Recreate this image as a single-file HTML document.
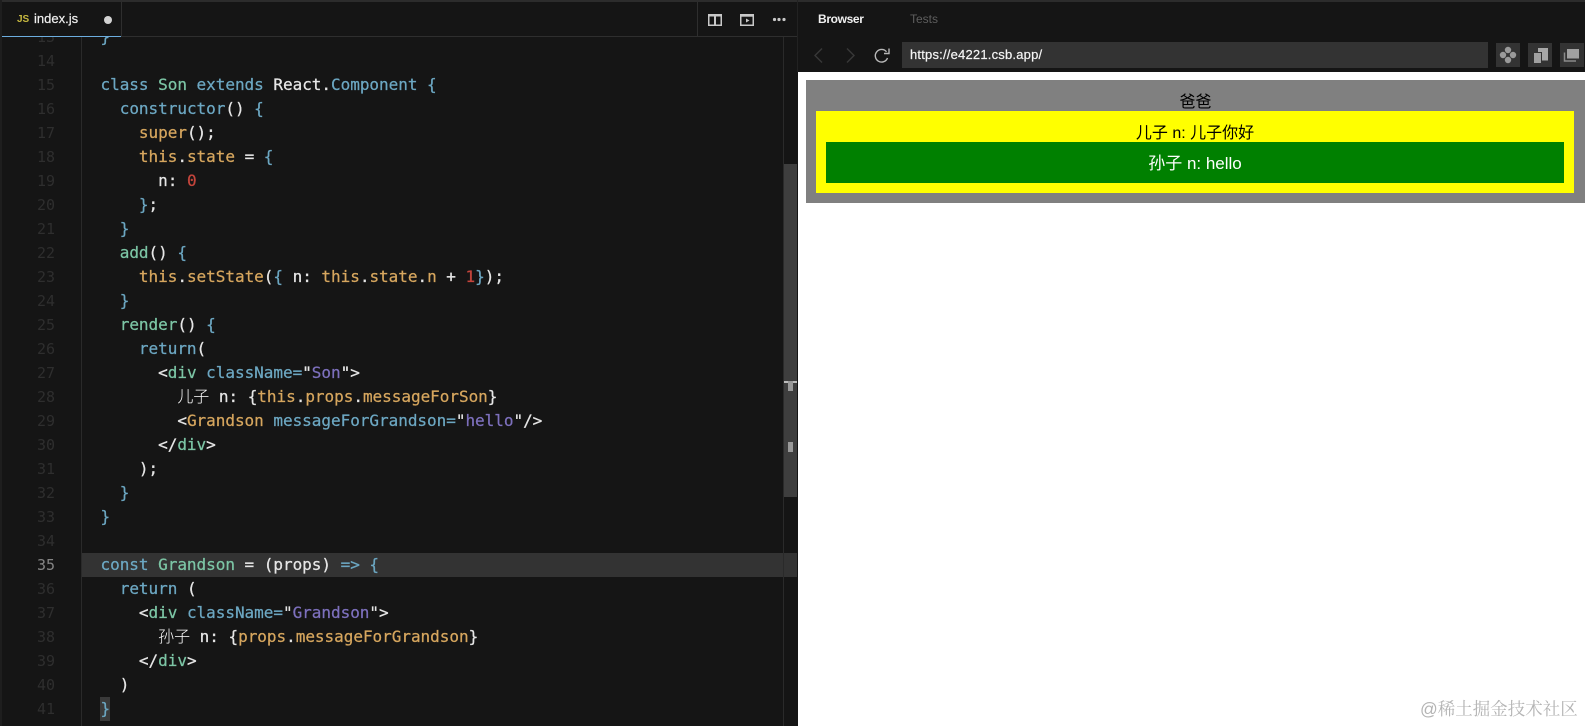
<!DOCTYPE html>
<html><head><meta charset="utf-8"><style>
html,body{margin:0;padding:0;width:1585px;height:726px;overflow:hidden;background:#151515}
*{box-sizing:border-box}
.a{position:absolute}
.l,.n{position:absolute;height:24px;line-height:24px;font:16px/24px "DejaVu Sans Mono","Liberation Mono","Noto Sans CJK SC",monospace;white-space:pre;letter-spacing:-.03px}
.l{left:100.5px;color:#e6e6e6;-webkit-text-stroke:.25px currentColor}
.n{left:30px;width:25px;text-align:right;color:#2e2e2e;font-size:15px}
.b{color:#6ca7c2}.g{color:#7cc5a5}.o{color:#d6a65e}.p{color:#7d70bd}.r{color:#c5453c}
.c{font-family:"WenQuanYi Zen Hei","Noto Sans CJK SC",sans-serif;font-weight:300;color:#fff;line-height:0;-webkit-text-stroke:0}
#code{position:absolute;left:0;top:37px;width:783px;height:689px;overflow:hidden}
.s{font-family:"Liberation Sans","Noto Sans CJK SC",sans-serif;text-align:center;font-size:16px;line-height:18px}
</style></head><body>
<div class="a" style="left:0;top:0;width:1585px;height:2px;background:#2c2c2c"></div>
<div class="a" style="left:0;top:0;width:2px;height:726px;background:#1e1e1e"></div>
<!-- tab bar -->
<div class="a" style="left:2px;top:36px;width:796px;height:1px;background:#2e2e2e"></div>
<div class="a" style="left:2px;top:36px;width:119px;height:1px;background:#6caddf"></div>
<div class="a" style="left:121px;top:2px;width:1px;height:35px;background:#2e2e2e"></div>
<div class="a" style="left:697px;top:2px;width:1px;height:35px;background:#2e2e2e"></div>
<div class="a" style="left:797px;top:0;width:1px;height:72px;background:#222"></div>
<div class="a" style="left:17px;top:14px;font:bold 10px/12px 'Liberation Sans',sans-serif;color:#c7b840">JS</div>
<div class="a" style="left:34px;top:11px;font:13px/16px 'Liberation Sans',sans-serif;color:#f0f0f0;-webkit-text-stroke:.2px currentColor">index.js</div>
<div class="a" style="left:104px;top:16px;width:8px;height:8px;border-radius:50%;background:#d2d2d2"></div>
<svg class="a" style="left:708px;top:13px" width="80" height="13" viewBox="0 0 80 13" fill="none" stroke="#c8c8c8" stroke-width="1.5">
<rect x=".75" y="1.75" width="12.5" height="10.5" stroke-width="1.5"/><path d="M0 2.5h14M7 2v10" stroke-width="2"/>
<rect x="32.75" y="1.75" width="12.5" height="10.5"/><path d="M32 2.5h14" stroke-width="2.4"/><path d="M38 5.5l3.5 2-3.5 2z" fill="#c8c8c8" stroke="none"/>
<circle cx="66.5" cy="6.5" r="1.6" fill="#c8c8c8" stroke="none"/><circle cx="71" cy="6.5" r="1.6" fill="#c8c8c8" stroke="none"/><circle cx="76" cy="6.5" r="1.6" fill="#c8c8c8" stroke="none"/>
</svg>
<!-- editor -->
<div class="a" style="left:81px;top:37px;width:1px;height:689px;background:#2a2a2a"></div>
<div class="a" style="left:82px;top:553px;width:715px;height:24px;background:#333"></div>
<div class="a" style="left:100px;top:697px;width:10px;height:24px;background:#3a3a3a"></div>
<div class="a" style="left:783px;top:37px;width:1px;height:689px;background:#2a2a2a"></div>
<!-- scrollbar -->
<div class="a" style="left:784px;top:164px;width:13px;height:333px;background:#3e3e3e"></div>
<div class="a" style="left:784px;top:381px;width:13px;height:2px;background:#bbb"></div>
<div class="a" style="left:788px;top:381px;width:5px;height:10px;background:#999"></div>
<div class="a" style="left:788px;top:442px;width:5px;height:10px;background:#999"></div>
<div class="a" style="left:784px;top:553px;width:13px;height:24px;background:#333"></div>
<div id="code">
<div class="n" style="top:-12px">13</div><div class="l" style="top:-12px"><span class="b">}</span></div>
<div class="n" style="top:12px">14</div>
<div class="n" style="top:36px">15</div><div class="l" style="top:36px"><span class="b">class</span> <span class="g">Son</span> <span class="b">extends</span> React.<span class="b">Component {</span></div>
<div class="n" style="top:60px">16</div><div class="l" style="top:60px">  <span class="b">constructor</span>() <span class="b">{</span></div>
<div class="n" style="top:84px">17</div><div class="l" style="top:84px">    <span class="o">super</span>();</div>
<div class="n" style="top:108px">18</div><div class="l" style="top:108px">    <span class="o">this</span>.<span class="o">state</span> = <span class="b">{</span></div>
<div class="n" style="top:132px">19</div><div class="l" style="top:132px">      n: <span class="r">0</span></div>
<div class="n" style="top:156px">20</div><div class="l" style="top:156px">    <span class="b">}</span>;</div>
<div class="n" style="top:180px">21</div><div class="l" style="top:180px">  <span class="b">}</span></div>
<div class="n" style="top:204px">22</div><div class="l" style="top:204px">  <span class="g">add</span>() <span class="b">{</span></div>
<div class="n" style="top:228px">23</div><div class="l" style="top:228px">    <span class="o">this</span>.<span class="o">setState</span>(<span class="b">{</span> n: <span class="o">this</span>.<span class="o">state</span>.<span class="o">n</span> + <span class="r">1</span><span class="b">}</span>);</div>
<div class="n" style="top:252px">24</div><div class="l" style="top:252px">  <span class="b">}</span></div>
<div class="n" style="top:276px">25</div><div class="l" style="top:276px">  <span class="g">render</span>() <span class="b">{</span></div>
<div class="n" style="top:300px">26</div><div class="l" style="top:300px">    <span class="b">return</span>(</div>
<div class="n" style="top:324px">27</div><div class="l" style="top:324px">      &lt;<span class="g">div</span> <span class="b">className=</span>"<span class="p">Son</span>"&gt;</div>
<div class="n" style="top:348px">28</div><div class="l" style="top:348px">        <span class="c">儿子</span> n: {<span class="o">this</span>.<span class="o">props</span>.<span class="o">messageForSon</span>}</div>
<div class="n" style="top:372px">29</div><div class="l" style="top:372px">        &lt;<span class="o">Grandson</span> <span class="b">messageForGrandson=</span>"<span class="p">hello</span>"/&gt;</div>
<div class="n" style="top:396px">30</div><div class="l" style="top:396px">      &lt;/<span class="g">div</span>&gt;</div>
<div class="n" style="top:420px">31</div><div class="l" style="top:420px">    );</div>
<div class="n" style="top:444px">32</div><div class="l" style="top:444px">  <span class="b">}</span></div>
<div class="n" style="top:468px">33</div><div class="l" style="top:468px"><span class="b">}</span></div>
<div class="n" style="top:492px">34</div>
<div class="n" style="top:516px;color:#858585">35</div><div class="l" style="top:516px"><span class="b">const</span> <span class="g">Grandson</span> = (props) <span class="b">=&gt; {</span></div>
<div class="n" style="top:540px">36</div><div class="l" style="top:540px">  <span class="b">return</span> (</div>
<div class="n" style="top:564px">37</div><div class="l" style="top:564px">    &lt;<span class="g">div</span> <span class="b">className=</span>"<span class="p">Grandson</span>"&gt;</div>
<div class="n" style="top:588px">38</div><div class="l" style="top:588px">      <span class="c">孙子</span> n: {<span class="o">props</span>.<span class="o">messageForGrandson</span>}</div>
<div class="n" style="top:612px">39</div><div class="l" style="top:612px">    &lt;/<span class="g">div</span>&gt;</div>
<div class="n" style="top:636px">40</div><div class="l" style="top:636px">  )</div>
<div class="n" style="top:660px">41</div><div class="l" style="top:660px"><span class="b">}</span></div>
</div>
<!-- browser -->
<div class="a" style="left:818px;top:11px;font:bold 12px/16px 'Liberation Sans',sans-serif;color:#f0f0f0;letter-spacing:-.35px">Browser</div>
<div class="a" style="left:910px;top:11px;font:12px/16px 'Liberation Sans',sans-serif;color:#5e5e5e">Tests</div>
<svg class="a" style="left:812px;top:44px" width="82" height="24" viewBox="0 0 82 24" fill="none">
<path d="M10 4.5L3 11.5l7 7" stroke="#383838" stroke-width="1.4"/>
<path d="M35 4.5l7 7-7 7" stroke="#383838" stroke-width="1.4"/>
<path d="M75.5 14a6.3 6.3 0 1 1-1-6.2" stroke="#b8b8b8" stroke-width="1.4"/><path d="M77 4.5v5h-5" stroke="#b8b8b8" stroke-width="1.4"/>
</svg>
<div class="a" style="left:902px;top:42px;width:586px;height:26px;background:#333;color:#f4f4f4;font:13px/26px 'Liberation Sans',sans-serif;padding-left:8px;letter-spacing:.2px;-webkit-text-stroke:.2px currentColor">https://e4221.csb.app/</div>
<div class="a" style="left:1496px;top:43px;width:24px;height:24px;background:#333"></div>
<div class="a" style="left:1528px;top:43px;width:24px;height:24px;background:#333"></div>
<div class="a" style="left:1560px;top:43px;width:24px;height:24px;background:#333"></div>
<svg class="a" style="left:1496px;top:43px" width="89" height="24" viewBox="0 0 89 24" fill="#9a9a9a">
<circle cx="12" cy="7" r="3.2"/><circle cx="12" cy="17" r="3.2"/><circle cx="7" cy="12" r="3.2"/><circle cx="17" cy="12" r="3.2"/>
<rect x="42" y="5" width="10" height="12.5" fill="#a8a8a8"/><rect x="37.5" y="9.5" width="8" height="11" fill="#a0a0a0" stroke="#333" stroke-width="1"/>
<rect x="71" y="6" width="12" height="9.5" fill="#a0a0a0"/><path d="M68.5 9.5v8.5H80" fill="none" stroke="#8a8a8a" stroke-width="1.5"/><path d="M70 10v6.5h10" fill="none" stroke="#333" stroke-width=".8"/>
</svg>
<!-- page -->
<div class="a" style="left:798px;top:72px;width:787px;height:654px;background:#fff"></div>
<div class="a" style="left:806px;top:80px;width:779px;height:123px;background:#808080"></div>
<div class="a" style="left:816px;top:111px;width:758px;height:82px;background:#ff0"></div>
<div class="a" style="left:826px;top:142px;width:738px;height:41px;background:#008000"></div>
<div class="a s" style="left:806px;top:94px;width:779px;color:#000">爸爸</div>
<div class="a s" style="left:816px;top:125px;width:758px;color:#000">儿子 n: 儿子你好</div>
<div class="a s" style="left:826px;top:155px;width:738px;color:#fff;font-size:17px">孙子 n: hello</div>
<div class="a" style="left:1420px;top:697px;font:17.5px/24px 'Liberation Sans','Noto Serif CJK SC',serif;color:#b4b4b4;white-space:nowrap">@稀土掘金技术社区</div>
</body></html>
